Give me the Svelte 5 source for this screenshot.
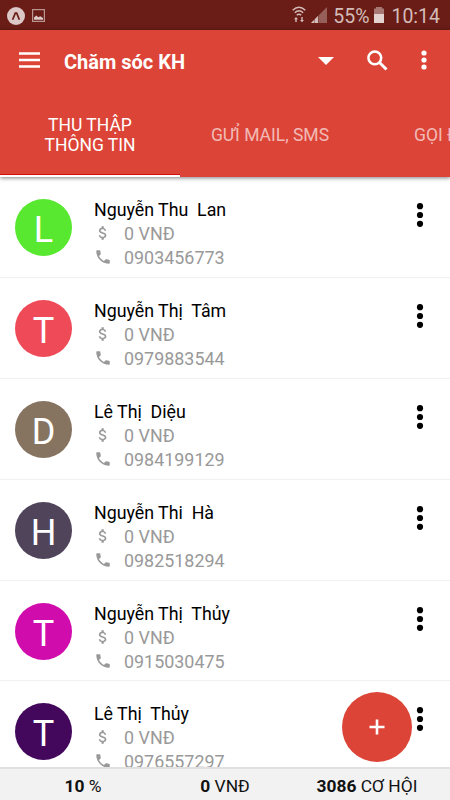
<script>
	const contacts = [
		{ name: 'Nguyễn Thu  Lan', phone: '0903456773', color: '#57e82f' },
		{ name: 'Nguyễn Thị  Tâm', phone: '0979883544', color: '#ee4a58' },
		{ name: 'Lê Thị  Diệu', phone: '0984199129', color: '#867461' },
		{ name: 'Nguyễn Thi  Hà', phone: '0982518294', color: '#4f4459' },
		{ name: 'Nguyễn Thị  Thủy', phone: '0915030475', color: '#d10cad' },
		{ name: 'Lê Thị  Thủy', phone: '0976557297', color: '#43085c' }
	];

	const tabs = ['THU THẬP THÔNG TIN', 'GƯỈ MAIL, SMS', 'GỌI ĐIỆN'];
	let active = $state(0);

	/** @param {string} name */
	function initial(name) {
		return name.trim().split(/\s+/).pop()[0];
	}
</script>

<div class="screen">
	<div class="status">
		<svg class="expo" width="18" height="18" viewBox="0 0 18 18">
			<circle cx="9" cy="9" r="9" fill="#dcc8c6" />
			<path d="M5.600 12.800 8.300 6.100h1.400l2.700 6.700" fill="none" stroke="#691d16" stroke-width="1.700" />
		</svg>
		<svg class="photo" width="13" height="13" viewBox="0 0 13 13">
			<rect x=".6" y=".6" width="11.8" height="11.8" fill="none" stroke="#b99692" stroke-width="1.2" />
			<path d="M2 10.8V8.5l2.3-2 2 1.8 2-1 2.7 1.7v1.8z" fill="#dcc8c6" />
		</svg>
		<svg class="wifi" width="14" height="17" viewBox="0 0 14 17">
			<g fill="none" stroke="#d4bcb9" stroke-width="1.5">
				<path d="M.7 4.2Q7-1.8 13.3 4.2M2.800 6.700q4.200-4 8.400 0M4.800 9.200q2.200-2 4.400 0" />
			</g>
			<path d="M4 11l2 2.200H4.700V16H3.300v-2.800H2zM10 16.200l-2-2.200h1.300v-3h1.400v3H12z" fill="#d4bcb9" />
		</svg>
		<svg class="signal" width="16" height="16" viewBox="0 0 16 16">
			<path d="M0 16 16 0v16z" fill="#965f5a" />
			<path d="M0 16l7-7v7z" fill="#d4bcb9" />
			<path d="M3.500 11v5M7.500 7v9" stroke="#691d16" stroke-width=".8" opacity=".5" />
		</svg>
		<span class="percent">55%</span>
		<svg class="battery" width="10" height="16" viewBox="0 0 10 16">
			<path d="M2 0h6v1.500h2V7H0V1.500h2z" fill="#a67773" />
			<path d="M0 7h10v9H0z" fill="#e3d2d0" />
		</svg>
		<span class="clock">10:14</span>
	</div>

	<header>
		<div class="toolbar">
			<svg class="menu" width="21" height="16" viewBox="0 0 21 16">
				<path d="M0 1.500h21M0 8h21M0 14.500h21" stroke="#fff" stroke-width="2.400" />
			</svg>
			<h1>Chăm sóc KH</h1>
			<svg class="caret" width="16" height="8" viewBox="0 0 16 8">
				<path d="M0 0h16L8 8z" fill="#fff" />
			</svg>
			<svg class="search" width="21" height="21" viewBox="0 0 21 21">
				<circle cx="7.800" cy="7.800" r="6.400" fill="none" stroke="#fff" stroke-width="2.500" />
				<path d="m12.300 12.300 7.200 7.200" stroke="#fff" stroke-width="3" />
			</svg>
			<svg class="more" width="6" height="20" viewBox="0 0 6 20">
				<circle cx="3" cy="3" r="2.600" />
				<circle cx="3" cy="10" r="2.600" />
				<circle cx="3" cy="17" r="2.600" />
			</svg>
		</div>
		<nav>
			{#each tabs as tab, i}
				<button class:active={active === i} onclick={() => (active = i)}><span>{tab}</span></button>
			{/each}
		</nav>
	</header>

	<main>
		{#each contacts as contact}
			<article>
				<div class="avatar" style:background={contact.color}>{initial(contact.name)}</div>
				<div class="info">
					<div class="name">{contact.name}</div>
					<div class="line">
						<svg width="18" height="18" viewBox="0 0 24 24">
							<path d="M11.800 10.900c-2.270-.59-3-1.200-3-2.150 0-1.090 1.010-1.850 2.700-1.850 1.780 0 2.440.85 2.500 2.100h2.210c-.07-1.720-1.120-3.300-3.210-3.810V3h-3v2.160c-1.940.42-3.500 1.680-3.500 3.610 0 2.310 1.910 3.460 4.700 4.130 2.500.6 3 1.480 3 2.410 0 .69-.49 1.790-2.700 1.790-2.060 0-2.870-.92-2.980-2.100h-2.200c.12 2.190 1.760 3.420 3.680 3.830V21h3v-2.150c1.950-.37 3.500-1.500 3.500-3.550 0-2.840-2.430-3.810-4.700-4.400z" />
						</svg>
						<span>0 VNĐ</span>
					</div>
					<div class="line">
						<svg width="18" height="18" viewBox="0 0 24 24">
							<path d="M6.620 10.790c1.440 2.830 3.760 5.140 6.590 6.590l2.200-2.200c.27-.27.67-.36 1.020-.24 1.120.37 2.330.57 3.570.57.55 0 1 .45 1 1V20c0 .55-.45 1-1 1-9.390 0-17-7.610-17-17 0-.55.45-1 1-1h3.500c.55 0 1 .45 1 1 0 1.250.2 2.450.57 3.570.11.35.03.74-.25 1.020l-2.200 2.200z" />
						</svg>
						<span>{contact.phone}</span>
					</div>
				</div>
				<svg class="dots" width="8" height="24" viewBox="0 0 8 24">
					<circle cx="4" cy="3.200" r="3.100" />
					<circle cx="4" cy="12" r="3.100" />
					<circle cx="4" cy="20.800" r="3.100" />
				</svg>
			</article>
		{/each}
	</main>

	<button class="fab" aria-label="add">
		<svg width="16" height="16" viewBox="0 0 16 16">
			<path d="M8 .5v15M.5 8h15" stroke="#fff" stroke-width="2.600" />
		</svg>
	</button>

	<footer>
		<div><b>10</b> %</div>
		<div><b>0</b> VNĐ</div>
		<div><b>3086</b> CƠ HỘI</div>
	</footer>
</div>

<style>
	:global(body) {
		margin: 0;
	}

	.screen {
		position: relative;
		display: flex;
		flex-direction: column;
		width: 450px;
		height: 800px;
		overflow: hidden;
		background: #fff;
		font-family: Roboto, 'Noto Sans', sans-serif;
	}

	svg {
		display: block;
		flex: none;
	}

	button {
		border: 0;
		padding: 0;
		font: inherit;
	}

	.status {
		box-sizing: border-box;
		display: flex;
		align-items: center;
		flex: none;
		height: 30px;
		padding: 1px 10px 0 7px;
		background: #691d16;
		color: #d4bcb9;
		font-size: 19.5px;
	}

	.photo {
		margin-left: 7px;
	}

	.wifi {
		margin: 0 0 2px auto;
	}

	.signal {
		margin: 0 0 2px 5px;
	}

	.percent {
		margin-left: 6px;
	}

	.battery {
		margin: 0 7px 1px 5px;
	}

	.percent,
	.clock {
		padding-top: 1px;
	}

	header {
		flex: none;
		z-index: 1;
		height: 147px;
		background: #dc4437;
		color: #fff;
		box-shadow: 0 1px 4px rgba(0, 0, 0, 0.5);
	}

	.toolbar {
		display: flex;
		align-items: center;
		height: 60px;
		padding: 0 24px 0 19px;
	}

	h1 {
		margin: 3px auto 0 24px;
		font-size: 20px;
		font-weight: 700;
		line-height: 24px;
	}

	.caret {
		margin-top: 2px;
	}

	.search {
		margin: 0 33px 0 33px;
	}

	.more {
		margin-right: -1px;
		fill: #fff;
	}

	nav {
		display: flex;
		width: 540px;
		height: 87px;
	}

	nav button {
		box-sizing: border-box;
		display: flex;
		align-items: center;
		justify-content: center;
		width: 180px;
		padding-top: 4px;
		border-bottom: 2px solid transparent;
		background: none;
		color: rgba(255, 255, 255, 0.65);
		font-size: 17.5px;
		line-height: 20px;
	}

	nav button span {
		max-width: 120px;
	}

	nav button.active {
		border-color: #fff;
		box-shadow: inset 0 -1px #d80d12;
		color: #fff;
	}

	nav button.active span {
		max-width: 100px;
	}

	main {
		flex: 1;
		min-height: 0;
		overflow: hidden;
	}

	article {
		box-sizing: border-box;
		display: flex;
		height: 100.9px;
		padding: 22px 26px 0 15px;
		border-bottom: 1px solid #f1f1f1;
	}

	.avatar {
		width: 57px;
		height: 57px;
		flex: none;
		border-radius: 50%;
		color: #fff;
		font-size: 36px;
		line-height: 62px;
		text-align: center;
	}

	.info {
		flex: 1;
		margin: -1px 0 0 22px;
		font-size: 17.8px;
		line-height: 24px;
	}

	.name {
		white-space: pre;
		color: #000;
	}

	.line {
		display: flex;
		align-items: center;
		color: #999;
	}

	.line svg {
		margin: -2px 12.5px 0 -0.5px;
		fill: #999;
	}

	.line span {
		font-size: 17.9px;
	}

	.dots {
		margin-top: 4px;
	}

	.fab {
		position: absolute;
		right: 38px;
		bottom: 38px;
		z-index: 1;
		display: flex;
		align-items: center;
		justify-content: center;
		width: 70px;
		height: 70px;
		border-radius: 50%;
		background: #dc4437;
	}

	footer {
		box-sizing: border-box;
		display: flex;
		align-items: center;
		flex: none;
		height: 33px;
		padding: 2px 12px 0;
		border-top: 2px solid #e0e0e0;
		background: #f2f2f2;
		color: #111;
		font-size: 17.4px;
	}

	footer div {
		flex: 1;
		text-align: center;
	}
</style>
